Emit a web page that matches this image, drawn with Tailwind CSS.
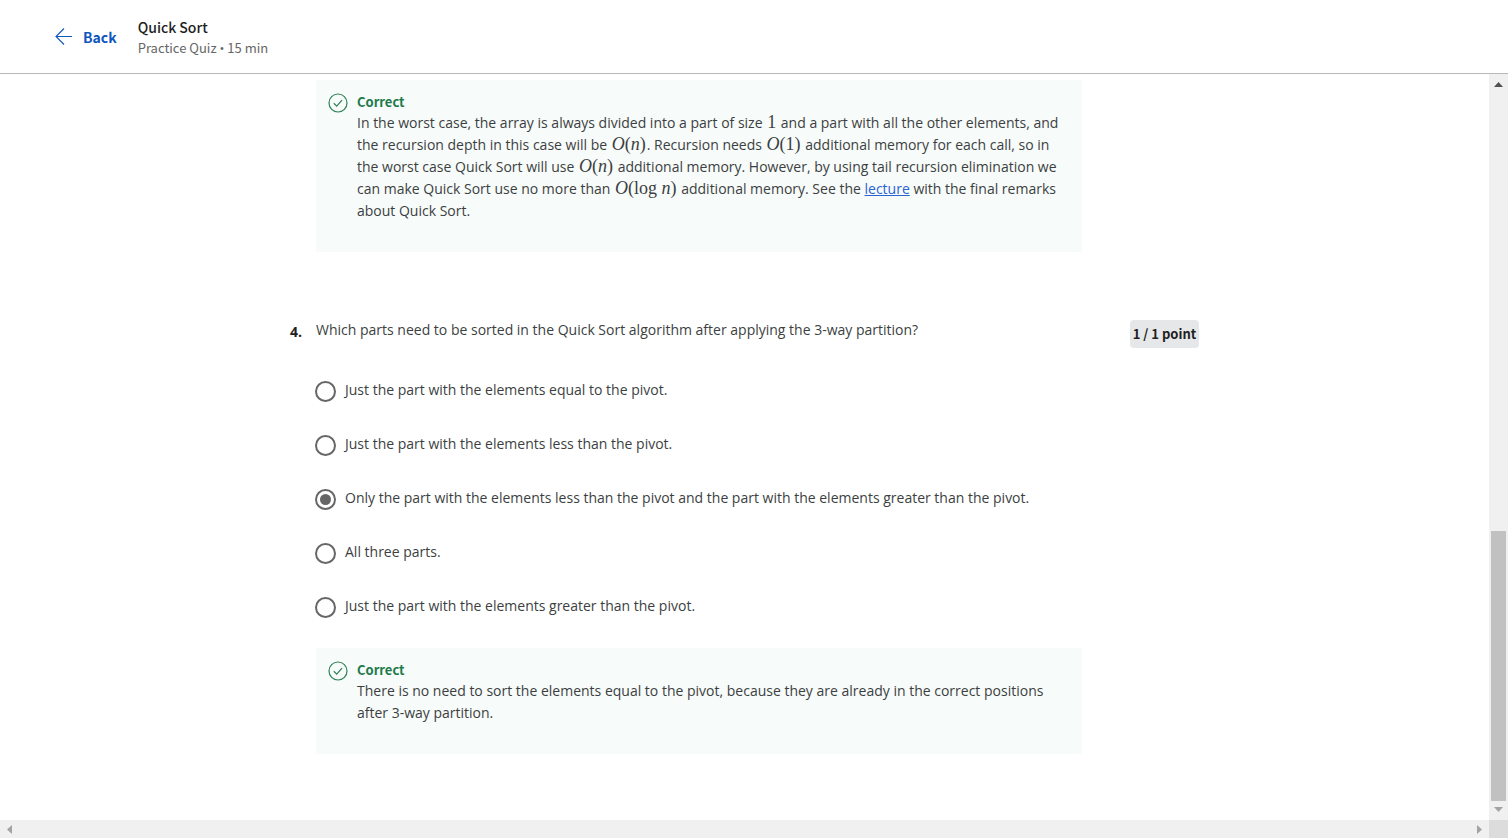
<!DOCTYPE html>
<html lang="en">
<head>
<meta charset="utf-8">
<meta name="viewport" content="width=device-width, initial-scale=1">
<title>Quick Sort</title>
<script src="https://cdn.jsdelivr.net/npm/@tailwindcss/browser@4"></script>
</head>
<body class="flex min-h-screen flex-col bg-white font-['Open_Sans',sans-serif] text-sm text-[#3c3f41]">
<header class="flex h-[74px] items-center gap-[21px] border-b border-[#b8b8b8] pl-[55px] font-['Noto_Sans_CJK_SC',sans-serif]">
  <a href="#" class="flex items-center gap-[11px] text-sm leading-5 font-bold text-[#0f56bd]">
    <svg class="h-[17px] w-[17px]" viewBox="0 0 17 17" fill="none" stroke="currentColor" stroke-width="1.1" aria-hidden="true"><path d="M17 8.5H1M9 .5l-8 8 8 8"/></svg>
    Back
  </a>
  <div>
    <h1 class="text-sm leading-[22px] font-medium text-[#1f1f1f]">Quick Sort</h1>
    <p class="text-[13px] leading-5 text-[#666]">Practice Quiz <span class="font-['Open_Sans',sans-serif] leading-none">•</span> 15 min</p>
  </div>
</header>

<div class="flex flex-1">
  <main class="flex-1">
    <div class="mx-auto max-w-[909px] pt-[6px]">
      <section class="mr-[117px] ml-[26px] flex gap-[9px] bg-[#f7fbfa] pt-3 pr-[13px] pb-[30px] pl-3">
        <svg class="mt-px h-5 w-5 shrink-0 text-[#2e8155]" viewBox="0 0 20 20" fill="none" stroke="currentColor" stroke-width="1.2" aria-hidden="true"><circle cx="10" cy="10" r="9"/><path d="M5.800 10.300l2.900 2.800 5.300-6"/></svg>
        <div>
          <h2 class="font-['Noto_Sans_CJK_SC',sans-serif] text-[13px] leading-5 font-bold text-[#1f7a4c]">Correct</h2>
          <p class="leading-[22px]">In the worst case, the array is always divided into a part of size <span class="mx-px font-['Liberation_Serif',serif] text-[18px] leading-none">1</span> and a part with all the other elements, and the recursion depth in this case will be <span class="mx-px font-['Liberation_Serif',serif] text-[18px] leading-none"><i>O</i>(<i>n</i>)</span>. Recursion needs <span class="mx-px font-['Liberation_Serif',serif] text-[18px] leading-none"><i>O</i>(1)</span> additional memory for each call, so in the worst case Quick Sort will use <span class="mx-px font-['Liberation_Serif',serif] text-[18px] leading-none"><i>O</i>(<i>n</i>)</span> additional memory. However, by using tail recursion elimination we can make Quick Sort use no more than <span class="mx-px font-['Liberation_Serif',serif] text-[18px] leading-none"><i>O</i>(log <i>n</i>)</span> additional memory. See the <a href="#" class="text-[#2a63d4] underline">lecture</a> with the final remarks about Quick Sort.</p>
        </div>
      </section>

      <section class="mt-[67px] flex items-start">
        <h3 class="w-[26px] pt-[3px] text-sm leading-5 font-bold text-[#1f1f1f]">4.</h3>
        <div class="flex-1">
          <fieldset>
            <legend class="leading-[22px]">Which parts need to be sorted in the Quick Sort algorithm after applying the 3-way partition?</legend>
            <div class="mt-9 flex flex-col gap-[29px] leading-[22px]">
              <label class="flex items-center gap-[9px]"><input type="radio" name="q4" class="-ml-px mt-1 grid size-[21px] shrink-0 appearance-none place-items-center rounded-full border-2 border-[#666] before:size-[11px] before:rounded-full checked:before:bg-[#666]">Just the part with the elements equal to the pivot.</label>
              <label class="flex items-center gap-[9px]"><input type="radio" name="q4" class="-ml-px mt-1 grid size-[21px] shrink-0 appearance-none place-items-center rounded-full border-2 border-[#666] before:size-[11px] before:rounded-full checked:before:bg-[#666]">Just the part with the elements less than the pivot.</label>
              <label class="flex items-center gap-[9px]"><input type="radio" name="q4" checked class="-ml-px mt-1 grid size-[21px] shrink-0 appearance-none place-items-center rounded-full border-2 border-[#666] before:size-[11px] before:rounded-full checked:before:bg-[#666]">Only the part with the elements less than the pivot and the part with the elements greater than the pivot.</label>
              <label class="flex items-center gap-[9px]"><input type="radio" name="q4" class="-ml-px mt-1 grid size-[21px] shrink-0 appearance-none place-items-center rounded-full border-2 border-[#666] before:size-[11px] before:rounded-full checked:before:bg-[#666]">All three parts.</label>
              <label class="flex items-center gap-[9px]"><input type="radio" name="q4" class="-ml-px mt-1 grid size-[21px] shrink-0 appearance-none place-items-center rounded-full border-2 border-[#666] before:size-[11px] before:rounded-full checked:before:bg-[#666]">Just the part with the elements greater than the pivot.</label>
            </div>
          </fieldset>
          <div class="mt-[30px] flex gap-[9px] bg-[#f7fbfa] pt-3 pr-[13px] pb-[30px] pl-3">
            <svg class="mt-px h-5 w-5 shrink-0 text-[#2e8155]" viewBox="0 0 20 20" fill="none" stroke="currentColor" stroke-width="1.2" aria-hidden="true"><circle cx="10" cy="10" r="9"/><path d="M5.800 10.300l2.900 2.800 5.300-6"/></svg>
            <div>
              <h2 class="font-['Noto_Sans_CJK_SC',sans-serif] text-[13px] leading-5 font-bold text-[#1f7a4c]">Correct</h2>
              <p class="leading-[22px]">There is no need to sort the elements equal to the pivot, because they are already in the correct positions after 3-way partition.</p>
            </div>
          </div>
        </div>
        <p class="mt-px ml-12 w-[69px] rounded bg-[#e5e7e8] py-1 text-center font-['Noto_Sans_CJK_SC',sans-serif] text-[13px] leading-5 font-bold text-[#1f1f1f]">1 / 1 point</p>
      </section>
    </div>
  </main>
  <!-- Vertical scroll track -->
  <div class="flex w-[19px] flex-col items-center bg-[#f0f0f0] pt-2 pb-2" aria-hidden="true">
    <svg class="h-[5px] w-[9px] shrink-0" viewBox="0 0 9 5"><path d="M0 5l4.500-5L9 5z" fill="#505050"/></svg>
    <div class="flex-1"></div>
    <div class="mb-[6px] h-[270px] w-[15px] bg-[#c1c1c1]"></div>
    <svg class="h-[5px] w-[9px] shrink-0" viewBox="0 0 9 5"><path d="M0 0l4.500 5L9 0z" fill="#a3a3a3"/></svg>
  </div>
</div>
<!-- Horizontal scroll track -->
<div class="flex h-[18px] items-center justify-between bg-[#f0f0f0] pl-[7px]" aria-hidden="true">
  <svg class="h-[9px] w-[5px]" viewBox="0 0 5 9"><path d="M5 0L0 4.500 5 9z" fill="#a3a3a3"/></svg>
  <div class="flex h-full items-center gap-[7px]">
    <svg class="h-[9px] w-[5px]" viewBox="0 0 5 9"><path d="M0 0l5 4.500L0 9z" fill="#a3a3a3"/></svg>
    <div class="h-full w-[19px] bg-[#dcdcdc]"></div>
  </div>
</div>
</body>
</html>
